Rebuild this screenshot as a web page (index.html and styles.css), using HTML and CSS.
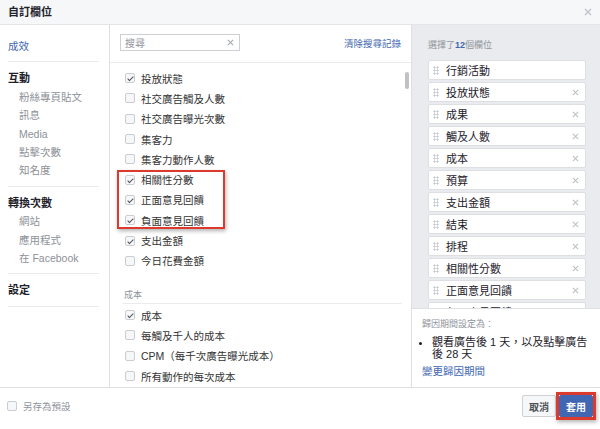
FILE: index.html
```html
<!DOCTYPE html>
<html lang="zh-Hant">
<head>
    <meta charset="UTF-8">
    <meta name="viewport" content="width=device-width, initial-scale=1.0">
    <title>自訂欄位</title>
    <link rel="stylesheet" href="styles.css">
</head>
<body>
    <div class="dialog">
        <div class="dialog-header">
            <h1 class="dialog-title">自訂欄位</h1>
            <span class="close">
                <svg width="8" height="8" viewBox="0 0 8 8"><path d="M1 1L7 7M7 1L1 7" stroke="#bec2c9" stroke-width="1.4"/></svg>
            </span>
        </div>

        <div class="dialog-body">
            <nav class="nav">
                <div class="nav-section first">
                    <div class="nav-head active">成效</div>
                </div>
                <div class="nav-section">
                    <div class="nav-head">互動</div>
                    <div class="nav-item">粉絲專頁貼文</div>
                    <div class="nav-item">訊息</div>
                    <div class="nav-item">Media</div>
                    <div class="nav-item">點擊次數</div>
                    <div class="nav-item">知名度</div>
                </div>
                <div class="nav-section">
                    <div class="nav-head">轉換次數</div>
                    <div class="nav-item">網站</div>
                    <div class="nav-item">應用程式</div>
                    <div class="nav-item">在 Facebook</div>
                </div>
                <div class="nav-section">
                    <div class="nav-head">設定</div>
                </div>
            </nav>

            <div class="picker">
                <div class="search-bar">
                    <div class="search">
                        <span class="search-placeholder">搜尋</span>
                        <svg width="7" height="7" viewBox="0 0 8 8"><path d="M1 1L7 7M7 1L1 7" stroke="#a7abb2" stroke-width="1.3"/></svg>
                    </div>
                    <a class="link" href="#">清除搜尋記錄</a>
                </div>

                <div class="metric-list">
                    <ul class="metrics">
                        <li><span class="cb on"></span>投放狀態</li>
                        <li><span class="cb"></span>社交廣告觸及人數</li>
                        <li><span class="cb"></span>社交廣告曝光次數</li>
                        <li><span class="cb"></span>集客力</li>
                        <li><span class="cb"></span>集客力動作人數</li>
                        <li><span class="cb on"></span>相關性分數</li>
                        <li><span class="cb on"></span>正面意見回饋</li>
                        <li><span class="cb on"></span>負面意見回饋</li>
                        <li><span class="cb on"></span>支出金額</li>
                        <li><span class="cb"></span>今日花費金額</li>
                    </ul>

                    <div class="group-title">成本</div>
                    <ul class="metrics group">
                        <li><span class="cb on"></span>成本</li>
                        <li><span class="cb"></span>每觸及千人的成本</li>
                        <li><span class="cb"></span>CPM（每千次廣告曝光成本）</li>
                        <li><span class="cb"></span>所有動作的每次成本</li>
                    </ul>

                    <div class="highlight"></div>
                    <div class="scroll-thumb"></div>
                </div>
            </div>

            <aside class="selected">
                <div class="selected-list">
                    <div class="selected-count">選擇了<b>12</b>個欄位</div>
                    <ul class="columns">
                        <li><span class="grip"></span><span class="col-name">行銷活動</span></li>
                        <li><span class="grip"></span><span class="col-name">投放狀態</span><span class="remove"><svg width="7" height="7" viewBox="0 0 8 8"><path d="M1 1L7 7M7 1L1 7" stroke="#bec2c9" stroke-width="1.3"/></svg></span></li>
                        <li><span class="grip"></span><span class="col-name">成果</span><span class="remove"><svg width="7" height="7" viewBox="0 0 8 8"><path d="M1 1L7 7M7 1L1 7" stroke="#bec2c9" stroke-width="1.3"/></svg></span></li>
                        <li><span class="grip"></span><span class="col-name">觸及人數</span><span class="remove"><svg width="7" height="7" viewBox="0 0 8 8"><path d="M1 1L7 7M7 1L1 7" stroke="#bec2c9" stroke-width="1.3"/></svg></span></li>
                        <li><span class="grip"></span><span class="col-name">成本</span><span class="remove"><svg width="7" height="7" viewBox="0 0 8 8"><path d="M1 1L7 7M7 1L1 7" stroke="#bec2c9" stroke-width="1.3"/></svg></span></li>
                        <li><span class="grip"></span><span class="col-name">預算</span><span class="remove"><svg width="7" height="7" viewBox="0 0 8 8"><path d="M1 1L7 7M7 1L1 7" stroke="#bec2c9" stroke-width="1.3"/></svg></span></li>
                        <li><span class="grip"></span><span class="col-name">支出金額</span><span class="remove"><svg width="7" height="7" viewBox="0 0 8 8"><path d="M1 1L7 7M7 1L1 7" stroke="#bec2c9" stroke-width="1.3"/></svg></span></li>
                        <li><span class="grip"></span><span class="col-name">結束</span><span class="remove"><svg width="7" height="7" viewBox="0 0 8 8"><path d="M1 1L7 7M7 1L1 7" stroke="#bec2c9" stroke-width="1.3"/></svg></span></li>
                        <li><span class="grip"></span><span class="col-name">排程</span><span class="remove"><svg width="7" height="7" viewBox="0 0 8 8"><path d="M1 1L7 7M7 1L1 7" stroke="#bec2c9" stroke-width="1.3"/></svg></span></li>
                        <li><span class="grip"></span><span class="col-name">相關性分數</span><span class="remove"><svg width="7" height="7" viewBox="0 0 8 8"><path d="M1 1L7 7M7 1L1 7" stroke="#bec2c9" stroke-width="1.3"/></svg></span></li>
                        <li><span class="grip"></span><span class="col-name">正面意見回饋</span><span class="remove"><svg width="7" height="7" viewBox="0 0 8 8"><path d="M1 1L7 7M7 1L1 7" stroke="#bec2c9" stroke-width="1.3"/></svg></span></li>
                        <li><span class="grip"></span><span class="col-name">負面意見回饋</span><span class="remove"><svg width="7" height="7" viewBox="0 0 8 8"><path d="M1 1L7 7M7 1L1 7" stroke="#bec2c9" stroke-width="1.3"/></svg></span></li>
                    </ul>
                </div>

                <div class="attribution">
                    <div class="attribution-title">歸因期間設定為：</div>
                    <ul class="attribution-list">
                        <li>觀看廣告後 1 天，以及點擊廣告後 28 天</li>
                    </ul>
                    <a class="link attribution-link" href="#">變更歸因期間</a>
                </div>
            </aside>
        </div>

        <div class="dialog-footer">
            <label class="save-default"><span class="cb"></span>另存為預設</label>
            <div class="actions">
                <button class="btn">取消</button>
                <button class="btn btn-primary">套用</button>
            </div>
        </div>
    </div>
</body>
</html>
```

FILE: styles.css
```css
* {
    margin: 0;
    padding: 0;
    box-sizing: border-box;
}

body {
    width: 600px;
    height: 429px;
    overflow: hidden;
    background: #fff;
    color: #1d2129;
    font-family: "Liberation Sans", "Noto Sans CJK TC", sans-serif;
}

ul {
    list-style: none;
}

a {
    text-decoration: none;
}

.link {
    color: #4267b2;
}

.dialog {
    display: flex;
    flex-direction: column;
    height: 429px;
}

/* header */

.dialog-header {
    height: 25px;
    flex: none;
    display: flex;
    align-items: center;
    justify-content: space-between;
    padding: 0 8px;
    background: #f6f7f9;
    border-bottom: 1px solid #e5e5e5;
}

.dialog-title {
    font-size: 11px;
    font-weight: bold;
    line-height: 14px;
}

.close {
    display: flex;
}

/* three columns */

.dialog-body {
    flex: 1;
    display: grid;
    grid-template-columns: 110px 302px 188px;
    min-height: 0;
}

.nav {
    border-right: 1px solid #dddfe2;
}

.nav-section {
    margin: 0 10px 0 8px;
    padding: 7px 0 6px;
    border-bottom: 1px solid #e9ebee;
}

.nav-section.first {
    padding: 12px 0 6px;
}

.nav-head {
    font-size: 11px;
    font-weight: bold;
    line-height: 18.4px;
}

.nav-head.active {
    color: #4267b2;
    font-weight: normal;
    font-size: 10.5px;
}

.nav-item {
    padding-left: 11px;
    font-size: 10.5px;
    line-height: 18.4px;
    color: #8d9197;
}

/* metric picker */

.picker {
    display: flex;
    flex-direction: column;
    border-right: 1px solid #dddfe2;
    min-height: 0;
}

.search-bar {
    height: 38px;
    flex: none;
    display: flex;
    justify-content: space-between;
    padding: 9px 10px 0;
    border-bottom: 1px solid #e9ebee;
}

.search {
    width: 120px;
    height: 17px;
    display: flex;
    align-items: center;
    justify-content: space-between;
    padding: 0 5px 0 4px;
    border: 1px solid #ccd0d5;
}

.search-placeholder {
    font-size: 10px;
    color: #90949c;
}

.search-bar .link {
    font-size: 9.5px;
    line-height: 19px;
}

.metric-list {
    flex: 1;
    position: relative;
    overflow: hidden;
    padding: 5px 9px 0 13px;
}

.metrics li {
    height: 20.3px;
    display: flex;
    align-items: center;
    gap: 6px;
    padding-left: 2px;
    font-size: 10.5px;
    color: #333;
}

.group-title {
    margin-top: 18px;
    padding: 0 0 2px 1px;
    font-size: 9px;
    line-height: 12px;
    color: #90949c;
    border-bottom: 1px solid #e9ebee;
}

.metrics.group {
    padding-top: 1px;
}

.cb {
    position: relative;
    flex: none;
    width: 10px;
    height: 10px;
    border: 1px solid #c9ccd1;
    border-radius: 2px;
    background: #f6f7f9;
}

.cb.on::after {
    content: '';
    position: absolute;
    left: 3px;
    top: 1px;
    width: 2px;
    height: 5px;
    border: solid #4b4f56;
    border-width: 0 1.3px 1.3px 0;
    transform: rotate(45deg);
}

.highlight {
    position: absolute;
    left: 7px;
    top: 107px;
    width: 108px;
    height: 59px;
    border: 2px solid #dc3a2c;
    box-shadow: 1px 2px 4px rgba(0, 0, 0, 0.3);
}

.scroll-thumb {
    position: absolute;
    left: 295px;
    top: 9px;
    width: 4px;
    height: 17px;
    border-radius: 2px;
    background: #c1c1c1;
}

/* selected columns */

.selected {
    display: flex;
    flex-direction: column;
    background: #e9ebee;
    min-height: 0;
}

.selected-list {
    flex: 1;
    overflow: hidden;
    padding: 14px 14px 0 16px;
}

.selected-count {
    font-size: 9px;
    line-height: 12px;
    color: #90949c;
}

.selected-count b {
    color: #4267b2;
}

.columns {
    margin-top: 9px;
}

.columns li {
    height: 20px;
    margin-bottom: 2px;
    display: flex;
    align-items: center;
    padding: 0 6px 0 4px;
    background: #fff;
    border: 1px solid #dddfe2;
    border-radius: 2px;
}

.grip {
    flex: none;
    width: 6px;
    height: 9px;
    margin-right: 7px;
    background-image: radial-gradient(circle, #c4c8ce 45%, transparent 52%);
    background-size: 3px 3px;
}

.col-name {
    flex: 1;
    font-size: 11px;
}

.remove {
    display: flex;
}

.attribution {
    flex: none;
    padding: 9px 10px 10px;
    background: #fff;
    border-top: 1px solid #dddfe2;
}

.attribution-title {
    font-size: 9px;
    line-height: 12px;
    color: #90949c;
}

.attribution-list {
    margin-top: 6px;
    padding-left: 10px;
    list-style: disc;
    font-size: 11px;
    line-height: 12px;
}

.attribution-link {
    display: block;
    margin-top: 5px;
    font-size: 10.5px;
    line-height: 12px;
}

/* footer */

.dialog-footer {
    height: 42px;
    flex: none;
    display: flex;
    justify-content: space-between;
    align-items: flex-start;
    padding: 7px 7px 0;
    border-top: 1px solid #dddfe2;
}

.save-default {
    height: 22px;
    display: flex;
    align-items: center;
    gap: 6px;
    font-size: 9.5px;
    color: #90949c;
}

.actions {
    display: flex;
    gap: 3px;
}

.btn {
    width: 34px;
    height: 22px;
    border: 1px solid #ced0d4;
    border-radius: 2px;
    background: #f6f7f9;
    color: #4b4f56;
    font-family: "Liberation Sans", "Noto Sans CJK TC", sans-serif;
    font-size: 10px;
    font-weight: bold;
}

.btn-primary {
    position: relative;
    background: #4267b2;
    border-color: #4267b2;
    color: #fff;
}

.btn-primary::after {
    content: '';
    position: absolute;
    inset: -4px;
    border: 3px solid #dc3a2c;
    box-shadow: 1px 2px 4px rgba(0, 0, 0, 0.3);
}
```
